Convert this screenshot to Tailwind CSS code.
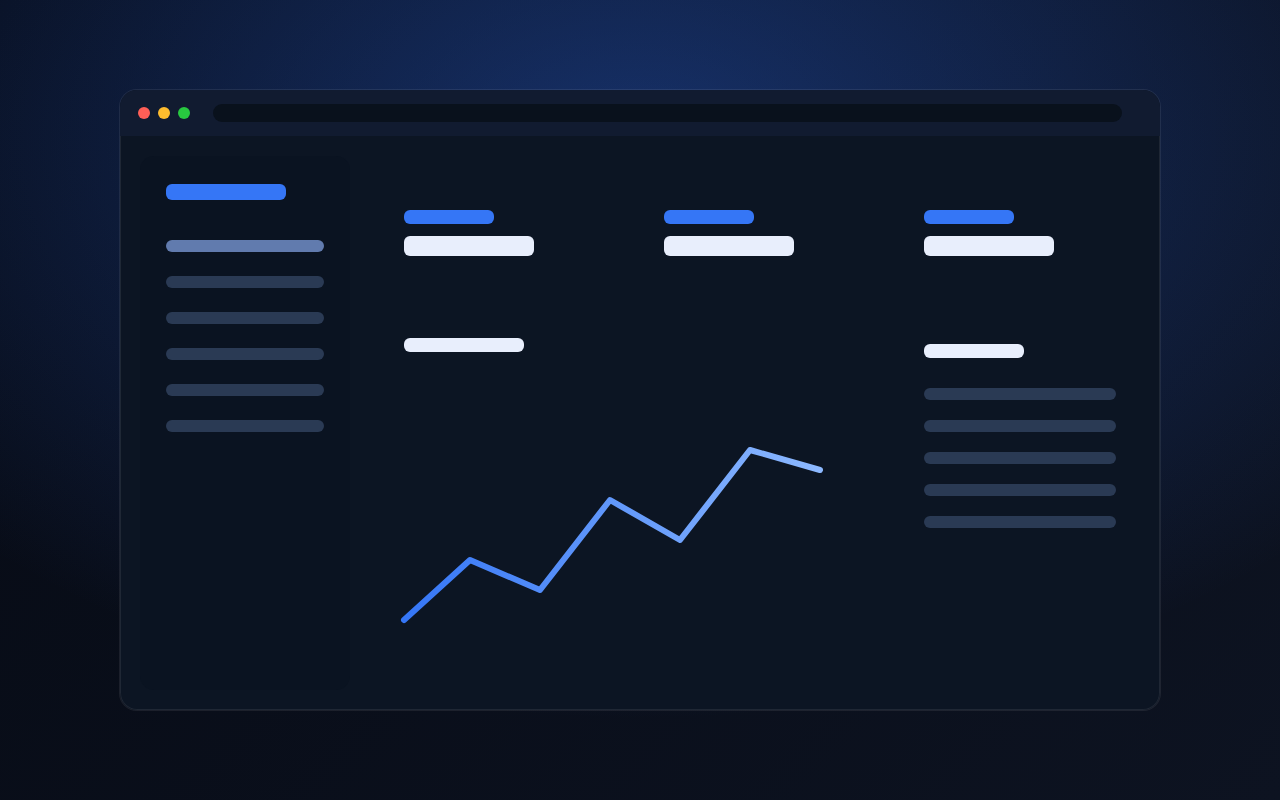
<!DOCTYPE html>
<html lang="en">

<head>
    <meta charset="UTF-8">
    <meta name="viewport" content="width=device-width, initial-scale=1.0">
    <title>Dashboard</title>
    <script src="https://cdn.jsdelivr.net/npm/@tailwindcss/browser@4"></script>
</head>

<body class="bg-[#070b15]">
    <div class="flex min-h-screen px-[119px] py-[89px] bg-[radial-gradient(72%_72%_at_50%_18%,rgb(47_111_246/0.36),rgb(47_111_246/0)),linear-gradient(135deg,#060a14,#0d1321)]">
        <!-- window -->
        <div class="flex flex-1 flex-col overflow-hidden rounded-[18px] border border-white/8 bg-[#0c1523] bg-clip-padding">
            <header class="flex h-[46px] items-center gap-2 bg-[#111b30] pl-[18px] pr-[38px]">
                <button type="button" aria-label="Close" class="size-3 rounded-full bg-[#ff5f57]"></button>
                <button type="button" aria-label="Minimize" class="size-3 rounded-full bg-[#febc2e]"></button>
                <button type="button" aria-label="Zoom" class="size-3 rounded-full bg-[#28c840]"></button>
                <input type="text" aria-label="Address" class="ml-[15px] h-[18px] min-w-0 flex-1 rounded-full bg-[#09111c] px-3 text-xs text-slate-300 outline-none">
            </header>

            <div class="flex flex-1 gap-[30px] rounded-b-[17px] border-x border-b border-white/8 px-[19px] pt-5 pb-[19px]">
                <!-- sidebar -->
                <aside class="w-[210px] shrink-0 rounded-[14px] bg-[#0a1321] px-[26px] pt-7">
                    <div class="h-4 w-[120px] rounded-md bg-[#3576f6]"></div>
                    <ul class="mt-10 flex flex-col gap-6">
                        <li class="h-3 rounded-md bg-[#617bae]"></li>
                        <li class="h-3 rounded-md bg-[#2a3a54]"></li>
                        <li class="h-3 rounded-md bg-[#2a3a54]"></li>
                        <li class="h-3 rounded-md bg-[#2a3a54]"></li>
                        <li class="h-3 rounded-md bg-[#2a3a54]"></li>
                        <li class="h-3 rounded-md bg-[#2a3a54]"></li>
                    </ul>
                </aside>

                <main class="grid flex-1 grid-cols-3 content-start gap-x-5 gap-y-6 pt-[30px]">
                    <section class="h-[104px] px-6 pt-6">
                        <div class="h-3.5 w-[90px] rounded-md bg-[#3576f6]"></div>
                        <div class="mt-3 h-5 w-[130px] rounded-md bg-[#e8eefc]"></div>
                    </section>
                    <section class="h-[104px] px-6 pt-6">
                        <div class="h-3.5 w-[90px] rounded-md bg-[#3576f6]"></div>
                        <div class="mt-3 h-5 w-[130px] rounded-md bg-[#e8eefc]"></div>
                    </section>
                    <section class="h-[104px] px-6 pt-6">
                        <div class="h-3.5 w-[90px] rounded-md bg-[#3576f6]"></div>
                        <div class="mt-3 h-5 w-[130px] rounded-md bg-[#e8eefc]"></div>
                    </section>

                    <!-- chart -->
                    <section class="col-span-2 px-6 pt-6">
                        <div class="h-3.5 w-[120px] rounded-md bg-[#e8eefc]"></div>
                        <svg class="mt-[88px] w-full overflow-visible" viewBox="0 0 452 190" fill="none" role="img" aria-label="Trend">
                            <defs>
                                <linearGradient id="line" x1="0" y1="0" x2="1" y2="0">
                                    <stop offset="0" stop-color="#3576f6" />
                                    <stop offset="1" stop-color="#8db9ff" />
                                </linearGradient>
                            </defs>
                            <polyline points="0,180 66,120 136,150 206,60 276,100 346,10 416,30" stroke="url(#line)" stroke-width="6" stroke-linecap="round" stroke-linejoin="round" />
                        </svg>
                    </section>

                    <!-- list -->
                    <section class="px-6 pt-[30px]">
                        <div class="h-3.5 w-[100px] rounded-md bg-[#e8eefc]"></div>
                        <ul class="mt-[30px] flex flex-col gap-5">
                            <li class="h-3 rounded-md bg-[#2a3a54]"></li>
                            <li class="h-3 rounded-md bg-[#2a3a54]"></li>
                            <li class="h-3 rounded-md bg-[#2a3a54]"></li>
                            <li class="h-3 rounded-md bg-[#2a3a54]"></li>
                            <li class="h-3 rounded-md bg-[#2a3a54]"></li>
                        </ul>
                    </section>
                </main>
            </div>
        </div>
    </div>
</body>

</html>
